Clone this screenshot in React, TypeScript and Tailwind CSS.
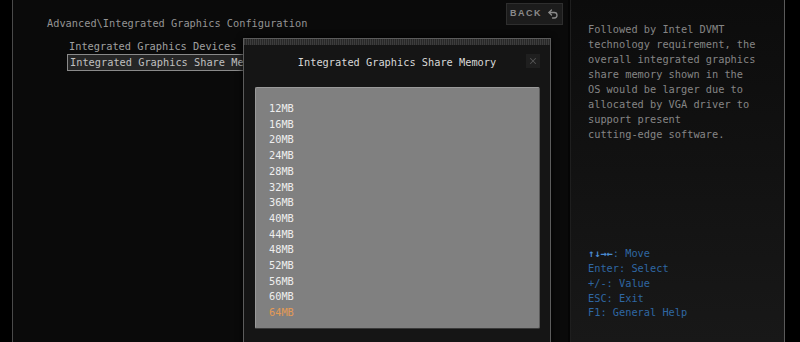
import { Undo2, X } from 'lucide-react';

const sizes = ['12MB', '16MB', '20MB', '24MB', '28MB', '32MB', '36MB', '40MB', '44MB', '48MB', '52MB', '56MB', '60MB', '64MB'];

export default function App() {
  return (
    <div className="flex h-[342px] w-[800px] overflow-hidden bg-black font-['DejaVu_Sans_Mono',monospace] text-[10.3px]">
      <div className="w-[12px] shrink-0" />

      {/* main setup panel */}
      <div className="relative w-[556px] shrink-0 border-l border-[#4a4a4a] bg-[#0a0a0a]">
        <div className="flex items-start justify-between pl-[34px] pr-[5px] pt-[3px]">
          <div className="pt-[13px] leading-[14px] text-[#949494]">Advanced\Integrated Graphics Configuration</div>
          <div className="flex h-[22px] w-[57px] items-center justify-center gap-[5px] border border-[#2e2e2e] bg-[#1c1c1c] font-['Liberation_Sans',sans-serif] text-[9px] font-bold tracking-[1.5px] text-[#8a8a8a]">
            BACK
            <Undo2 size={12} strokeWidth={2.6} className="text-[#8a8a8a]" />
          </div>
        </div>

        <div className="mt-[9px] flex flex-col pl-[54px] leading-[15px] text-[#a0a0a0]">
          <div className="pl-[2px]">Integrated Graphics Devices</div>
          <div className="w-[190px] whitespace-nowrap border border-[#8a8a8a] bg-[#262626] pl-[2px] text-[#c0c0c0]">Integrated Graphics Share Memory</div>
        </div>

        {/* popup */}
        <div className="absolute left-[230px] top-[38px] h-[320px] w-[308px] border border-[#5c5c5c] bg-[#151515] shadow-[0_0_6px_#000]">
          <div className="h-[6px] bg-[repeating-linear-gradient(90deg,#3c3c3c_0_1px,#272727_1px_2px)]" />
          <div className="relative flex h-[34px] items-center justify-center pt-[2px] text-[#d8d8d8]">
            Integrated Graphics Share Memory
            <div className="absolute right-[10px] top-[9px] flex h-[14px] w-[14px] items-center justify-center bg-[#1f1f1f]">
              <X size={10} strokeWidth={2.5} className="text-[#555]" />
            </div>
          </div>
          <div className="ml-[11px] mt-[8px] h-[242px] w-[285px] rounded-[2px] border border-[#9a9a9a] border-b-[#3a3a3a] border-r-[#5a5a5a] bg-[#808080] pl-[13px] pt-[13px] leading-[15.7px] text-[#eeeeee]">
            {sizes.map((s, i) => (
              <div key={s} className={i === sizes.length - 1 ? 'text-[#e39a55]' : ''}>{s}</div>
            ))}
          </div>
        </div>
      </div>

      {/* help panel */}
      <div className="w-[2px] shrink-0 bg-[#050505]" />
      <div className="flex w-[215px] shrink-0 flex-col justify-between border-l border-r border-l-[#1e1e1e] border-r-[#5a5a5a] bg-gradient-to-b from-[#0c0c0c] to-[#181818] pb-[22px] pl-[17px] pt-[22px]">
        <div className="leading-[15px] text-[#858585]">
          <div>Followed by Intel DVMT</div>
          <div>technology requirement, the</div>
          <div>overall integrated graphics</div>
          <div>share memory shown in the</div>
          <div>OS would be larger due to</div>
          <div>allocated by VGA driver to</div>
          <div>support present</div>
          <div>cutting-edge software.</div>
        </div>
        <div className="leading-[14.7px] text-[#2f67a3]">
          <div><span className="font-bold text-[#4a8ad0]">↑↓→←</span>: Move</div>
          <div>Enter: Select</div>
          <div>+/-: Value</div>
          <div>ESC: Exit</div>
          <div>F1: General Help</div>
        </div>
      </div>
    </div>
  );
}
